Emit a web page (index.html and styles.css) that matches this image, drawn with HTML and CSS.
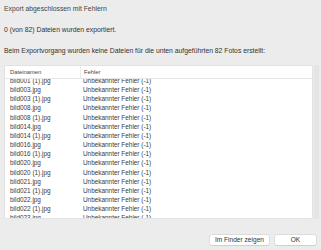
FILE: index.html
```html
<!DOCTYPE html>
<html lang="de">
<head>
	<meta charset="UTF-8">
	<title>Export abgeschlossen mit Fehlern</title>
	<link rel="stylesheet" href="styles.css">
</head>
<body>
	<div class="dialog">
		<p class="title">Export abgeschlossen mit Fehlern</p>
		<p class="msg">0 (von 82) Dateien wurden exportiert.</p>
		<p class="msg">Beim Exportvorgang wurden keine Dateien für die unten aufgeführten 82 Fotos erstellt:</p>
		<div class="list-wrap">
			<div class="list">
				<div class="list-head">
					<div class="col-name">Dateinamen</div>
					<div class="col-err">Fehler</div>
				</div>
				<div class="list-body">
					<div class="rows">
						<div class="row"><span class="col-name">bild001 (1).jpg</span><span class="col-err">Unbekannter Fehler (-1)</span></div>
						<div class="row"><span class="col-name">bild003.jpg</span><span class="col-err">Unbekannter Fehler (-1)</span></div>
						<div class="row"><span class="col-name">bild003 (1).jpg</span><span class="col-err">Unbekannter Fehler (-1)</span></div>
						<div class="row"><span class="col-name">bild008.jpg</span><span class="col-err">Unbekannter Fehler (-1)</span></div>
						<div class="row"><span class="col-name">bild008 (1).jpg</span><span class="col-err">Unbekannter Fehler (-1)</span></div>
						<div class="row"><span class="col-name">bild014.jpg</span><span class="col-err">Unbekannter Fehler (-1)</span></div>
						<div class="row"><span class="col-name">bild014 (1).jpg</span><span class="col-err">Unbekannter Fehler (-1)</span></div>
						<div class="row"><span class="col-name">bild016.jpg</span><span class="col-err">Unbekannter Fehler (-1)</span></div>
						<div class="row"><span class="col-name">bild016 (1).jpg</span><span class="col-err">Unbekannter Fehler (-1)</span></div>
						<div class="row"><span class="col-name">bild020.jpg</span><span class="col-err">Unbekannter Fehler (-1)</span></div>
						<div class="row"><span class="col-name">bild020 (1).jpg</span><span class="col-err">Unbekannter Fehler (-1)</span></div>
						<div class="row"><span class="col-name">bild021.jpg</span><span class="col-err">Unbekannter Fehler (-1)</span></div>
						<div class="row"><span class="col-name">bild021 (1).jpg</span><span class="col-err">Unbekannter Fehler (-1)</span></div>
						<div class="row"><span class="col-name">bild022.jpg</span><span class="col-err">Unbekannter Fehler (-1)</span></div>
						<div class="row"><span class="col-name">bild022 (1).jpg</span><span class="col-err">Unbekannter Fehler (-1)</span></div>
						<div class="row"><span class="col-name">bild023.jpg</span><span class="col-err">Unbekannter Fehler (-1)</span></div>
					</div>
				</div>
			</div>
			<div class="scrollbar"></div>
		</div>
		<div class="buttons">
			<button type="button" class="btn">Im Finder zeigen</button>
			<button type="button" class="btn btn-ok">OK</button>
		</div>
	</div>
</body>
</html>
```

FILE: styles.css
```css
html, body {
	margin: 0;
	padding: 0;
	background-color: #ececec;
}
body {
	font-family: "Liberation Sans", Arial, sans-serif;
	font-size: 6.8px;
	color: #333;
	width: 321px;
	height: 250px;
	overflow: hidden;
}
.dialog {
	padding: 4px 0 0 4px;
}
.dialog p {
	margin: 0;
	line-height: 9px;
}
.title {
	color: #444;
}
.msg {
	margin-top: 12px !important;
}
.list-wrap {
	display: flex;
	margin-top: 10px;
	height: 154px;
}
.list {
	flex: 1;
	background: white;
	border: 1px solid #e2e2e2;
	border-radius: 2px;
	display: flex;
	flex-direction: column;
	overflow: hidden;
}
.list-head {
	display: flex;
	height: 12px;
	line-height: 12px;
	font-size: 5.8px;
	border-bottom: 1px solid #e6e6e6;
	color: #444;
}
.list-head .col-name {
	border-right: 1px solid #ececec;
}
.col-name {
	width: 70px;
	padding-left: 5px;
	flex-shrink: 0;
}
.col-err {
	padding-left: 3px;
}
.list-body {
	flex: 1;
	overflow: hidden;
}
.rows {
	margin-top: -3px;
}
.row {
	display: flex;
	height: 9.17px;
	line-height: 9.17px;
	font-size: 6.4px;
	color: #3a3a3a;
	white-space: nowrap;
}
.scrollbar {
	width: 5px;
	margin-left: 1px;
	margin-right: 2px;
	background: #e4e4e4;
}
.buttons {
	display: flex;
	justify-content: flex-end;
	gap: 6px;
	padding: 16px 5px 0 0;
}
.btn {
	font-family: "Liberation Sans", Arial, sans-serif;
	font-size: 6.6px;
	color: #333;
	background: white;
	border: none;
	border-radius: 2px;
	box-shadow: 0 0 0 0.5px #d0d0d0, 0 0.5px 1px rgba(0,0,0,0.12);
	height: 10px;
	line-height: 10px;
	padding: 0 5px;
}
.btn-ok {
	width: 41px;
}
```
